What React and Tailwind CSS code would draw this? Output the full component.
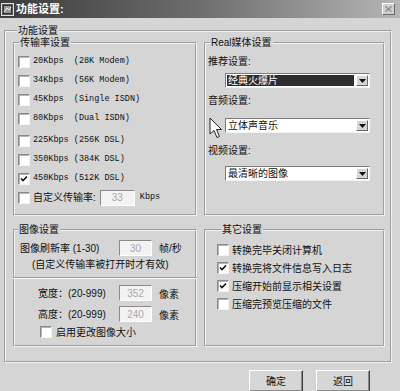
import React from 'react';

const sans = "font-['Liberation_Sans','Noto_Sans_CJK_SC',sans-serif]";
const mono = "font-['Liberation_Mono','Noto_Sans_CJK_SC',monospace]";

// sunken checkbox, win9x style
function Check({ checked = false }) {
  return (
    <span className="relative w-[12px] h-[12px] shrink-0 bg-white border border-t-[#8a8a8a] border-l-[#8a8a8a] border-r-[#f4f4f4] border-b-[#f4f4f4] shadow-[inset_1px_1px_0_#b4b4b4]">
      {checked && (
        <svg className="absolute left-[1px] top-[1px]" width="8" height="8" viewBox="0 0 8 8">
          <path d="M1 3.5 L3 5.5 L7 1.5" fill="none" stroke="#111" strokeWidth="1.6" />
        </svg>
      )}
    </span>
  );
}

function Field({ value, w = 'w-[33px]' }) {
  return (
    <span className={`${w} h-[16px] shrink-0 flex items-center justify-center bg-[#f3f3f3] border border-t-[#8a8a8a] border-l-[#8a8a8a] border-r-white border-b-white text-[10px] text-[#a8a8a8] ${sans}`}>
      {value}
    </span>
  );
}

function Combo({ text, selected = false }) {
  return (
    <div className="ml-[17px] w-[145px] h-[15px] flex items-center bg-white border border-t-[#7a7a7a] border-l-[#7a7a7a] border-r-[#f4f4f4] border-b-[#f4f4f4] pl-[1px] pr-[1px]">
      <div className={`flex-1 h-[11px] flex items-center pl-[1px] text-[10px] leading-[11px] ${selected ? 'bg-[#2e2e2e] text-white' : 'text-[#111]'}`}>
        {text}
      </div>
      <div className="ml-[2px] w-[12px] h-[11px] flex items-center justify-center bg-[#d6d6d6] border border-t-white border-l-white border-r-[#6a6a6a] border-b-[#6a6a6a]">
        <svg width="7" height="4" viewBox="0 0 7 4">
          <path d="M0 0 H7 L3.5 4 Z" fill="#111" />
        </svg>
      </div>
    </div>
  );
}

function Group({ title, legend = 'ml-[2px]', className = '', children }) {
  return (
    <fieldset className={`min-w-0 border-2 [border-style:groove] border-[#f2f2f2] ${className}`}>
      <legend className={`${legend} px-[1px] text-[10px] leading-[12px] text-[#111]`}>{title}</legend>
      {children}
    </fieldset>
  );
}

const rates = [
  ['20Kbps  (28K Modem)', false],
  ['34Kbps  (56K Modem)', false],
  ['45Kbps  (Single ISDN)', false],
  ['80Kbps  (Dual ISDN)', false],
  ['225Kbps (256K DSL)', false],
  ['350Kbps (384K DSL)', false],
  ['450Kbps (512K DSL)', true],
];

const others = [
  ['转换完毕关闭计算机', false],
  ['转换完将文件信息写入日志', true],
  ['压缩开始前显示相关设置', true],
  ['压缩完预览压缩的文件', false],
];

function Button({ children }) {
  return (
    <div className="w-[54px] h-[22px] flex items-center justify-center bg-[#d6d6d6] border border-t-white border-l-white border-r-[#404040] border-b-[#404040] shadow-[inset_-1px_-1px_0_#8a8a8a] text-[10px] text-[#111]">
      {children}
    </div>
  );
}

export default function App() {
  return (
    <div className={`relative w-[400px] h-[391px] overflow-hidden bg-[#d5d5d5] text-[#111] ${sans}`}>
      {/* title bar */}
      <div className="h-[18px] flex items-center bg-gradient-to-r from-[#3c3c3c] via-[#6e6e6e] to-[#b6b6b6]">
        <svg className="ml-[1px]" width="13" height="13" viewBox="0 0 13 13">
          <rect x="0.5" y="0.5" width="12" height="12" fill="#5a5a5a" stroke="#e0e0e0" />
          <rect x="2.5" y="2.5" width="8" height="8" fill="#9a9a9a" stroke="#303030" />
          <path d="M3 9 L6 5 L8 7 L10 4" fill="none" stroke="#f0f0f0" strokeWidth="1" />
        </svg>
        <span className="ml-[2px] text-[11px] font-bold text-white leading-none">功能设置:</span>
        <div className="ml-auto mr-[5px] w-[13px] h-[12px] flex items-center justify-center bg-[#cfcfcf] border border-t-white border-l-white border-r-[#6a6a6a] border-b-[#6a6a6a]">
          <svg width="7" height="6" viewBox="0 0 7 6">
            <path d="M0.5 0.5 L6.5 5.5 M6.5 0.5 L0.5 5.5" stroke="#8a8a8a" strokeWidth="1.3" />
          </svg>
        </div>
      </div>

      {/* outer group */}
      <Group title="功能设置" legend="ml-[4px]" className="ml-[4px] mt-[7px] w-[388px] h-[338px] pl-[7px] pr-[5px]">
        <div className="flex gap-[7px]">
          <Group title="传输率设置" legend="ml-[1px]" className="w-[184px] h-[179px] pl-[3px] pt-[3px]">
            {rates.map(([label, on], i) => (
              <div key={label} className={`h-[19px] flex items-center gap-[3px] ${i === 4 ? 'mt-[3px]' : ''}`}>
                <Check checked={on} />
                <span className={`${mono} text-[8.5px] whitespace-pre`}>{label}</span>
              </div>
            ))}
            <div className="h-[19px] flex items-center gap-[3px]">
              <Check />
              <span className="text-[10px]">自定义传输率:</span>
              <span className="ml-[1px]"><Field value="33" w="w-[35px]" /></span>
              <span className={`${mono} ml-[2px] text-[8.5px]`}>Kbps</span>
            </div>
          </Group>

          <Group title="Real媒体设置" legend="ml-[2px]" className="w-[181px] h-[179px] pl-[2px]">
            <div className="mt-[7px] text-[10px] leading-[12px]">推荐设置:</div>
            <div className="mt-[5px]"><Combo text="经典火爆片" selected /></div>
            <div className="mt-[7px] text-[10px] leading-[12px]">音频设置:</div>
            <div className="mt-[11px]"><Combo text="立体声音乐" /></div>
            <div className="mt-[12px] text-[10px] leading-[12px]">视频设置:</div>
            <div className="mt-[9px]"><Combo text="最清晰的图像" /></div>
          </Group>
        </div>

        <div className="mt-[8px] flex gap-[7px]">
          <Group title="图像设置" legend="ml-[3px]" className="w-[184px] h-[123px]">
            <div className="mt-[4px] h-[16px] flex items-center pl-[5px]">
              <span className="w-[99px] text-[10px]">图像刷新率 (1-30)</span>
              <Field value="30" />
              <span className="ml-[7px] text-[10px]">帧/秒</span>
            </div>
            <div className="mt-[3px] pl-[17px] h-[12px] text-[10px] leading-[12px]">(自定义传输率被打开时才有效)</div>
            <div className="mt-[6px] -mx-[2px] h-[2px] border-t border-t-[#9e9e9e] border-b border-b-[#f6f6f6]" />
            <div className="mt-[6px] h-[16px] flex items-center pl-[23px]">
              <span className="w-[81px] text-[10px]">宽度：(20-999)</span>
              <Field value="352" />
              <span className="ml-[7px] mt-[3px] text-[10px]">像素</span>
            </div>
            <div className="mt-[5px] h-[16px] flex items-center pl-[23px]">
              <span className="w-[81px] text-[10px]">高度：(20-999)</span>
              <Field value="240" />
              <span className="ml-[7px] mt-[3px] text-[10px]">像素</span>
            </div>
            <div className="mt-[4px] h-[12px] flex items-center gap-[4px] pl-[25px]">
              <Check />
              <span className="text-[10px]">启用更改图像大小</span>
            </div>
          </Group>

          <Group title="其它设置" legend="ml-[4px]" className="w-[181px] h-[123px] pl-[11px] pt-[5px]">
            {others.map(([label, on]) => (
              <div key={label} className="h-[18px] flex items-center gap-[3px]">
                <Check checked={on} />
                <span className="text-[10px]">{label}</span>
              </div>
            ))}
          </Group>
        </div>
      </Group>

      {/* buttons */}
      <div className="mt-[7px] flex justify-end gap-[13px] pr-[30px]">
        <Button>确定</Button>
        <Button>返回</Button>
      </div>

      {/* mouse pointer over the audio combo */}
      <svg className="absolute left-[209px] top-[117px]" width="14" height="22" viewBox="0 0 14 22">
        <path d="M1 1 L1 17 L5 13.5 L8 20.5 L10.5 19.5 L7.5 12.5 L12.5 12.5 Z" fill="#fff" stroke="#222" strokeWidth="1" strokeLinejoin="miter" />
      </svg>
    </div>
  );
}
